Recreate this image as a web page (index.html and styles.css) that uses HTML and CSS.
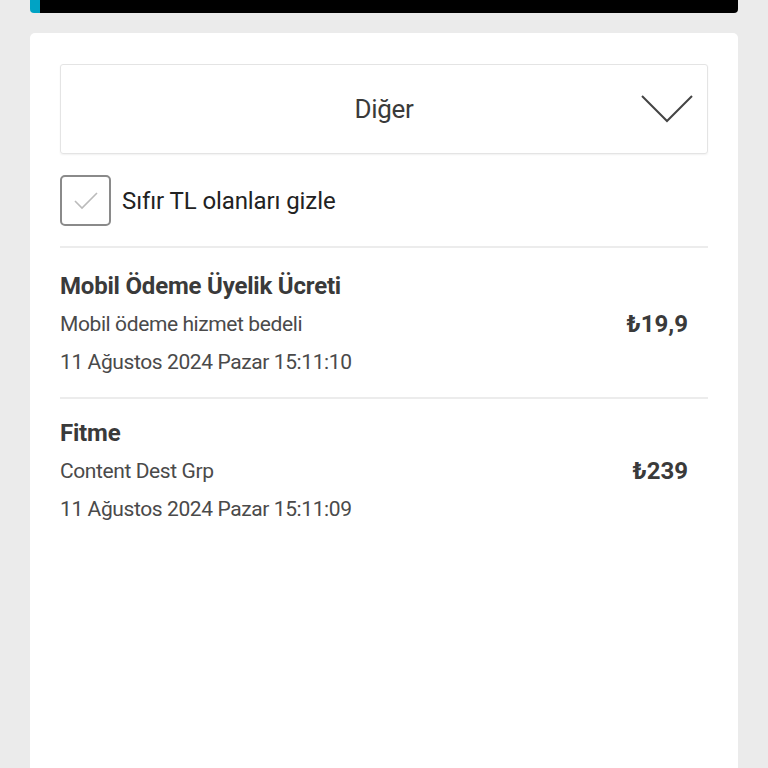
FILE: index.html
```html
<!DOCTYPE html>
<html lang="tr">
<head>
  <meta charset="UTF-8">
  <meta name="viewport" content="width=device-width, initial-scale=1.0">
  <title>Diğer harcamalar</title>
  <link rel="stylesheet" href="styles.css">
</head>
<body>
  <!-- Top bar (cut off) -->
  <div class="top-bar"></div>

  <div class="card">
    <!-- Category dropdown -->
    <div class="dropdown">
      <span class="dropdown-label">Diğer</span>
      <svg class="chevron" width="54" height="30" viewBox="0 0 54 30">
        <polyline points="2,2 27,27 52,2" fill="none" stroke="#444" stroke-width="2"/>
      </svg>
    </div>

    <label class="filter">
      <span class="checkbox">
        <svg width="26" height="20" viewBox="0 0 26 20">
          <polyline points="2,10 9,17 24,2" fill="none" stroke="#bbb" stroke-width="1.6"/>
        </svg>
      </span>
      <span class="filter-text">Sıfır TL olanları gizle</span>
    </label>

    <ul class="charges">
      <li class="charge">
        <div class="charge-info">
          <div class="charge-title">Mobil Ödeme Üyelik Ücreti</div>
          <div class="charge-desc">Mobil ödeme hizmet bedeli</div>
          <div class="charge-date">11 Ağustos 2024 Pazar 15:11:10</div>
        </div>
        <div class="charge-price">₺19,9</div>
      </li>
      <li class="charge">
        <div class="charge-info">
          <div class="charge-title">Fitme</div>
          <div class="charge-desc">Content Dest Grp</div>
          <div class="charge-date">11 Ağustos 2024 Pazar 15:11:09</div>
        </div>
        <div class="charge-price">₺239</div>
      </li>
    </ul>
  </div>
</body>
</html>
```
FILE: styles.css
```css
body {
  font-family: 'Roboto', 'Liberation Sans', sans-serif;
  background-color: #ebebeb;
  color: #333;
  margin: 0;
  padding: 0 30px;
  height: 768px;
  overflow: hidden;
}
.top-bar {
  height: 13px;
  background-color: #000;
  border-left: 10px solid #00a3c4;
  border-radius: 0 0 4px 4px;
  margin-bottom: 20px;
}
.card {
  background-color: #fff;
  border-radius: 5px 5px 0 0;
  padding: 31px 30px 0;
  height: 735px;
}
.dropdown {
  display: flex;
  align-items: center;
  justify-content: center;
  position: relative;
  height: 88px;
  border: 1px solid #e4e4e4;
  border-radius: 3px;
  box-shadow: 0 1px 2px rgba(0, 0, 0, 0.06);
}
.dropdown-label {
  font-size: 26px;
  color: #3a3a3a;
  letter-spacing: -0.3px;
}
.chevron {
  position: absolute;
  right: 13px;
  top: 29px;
}
.filter {
  display: flex;
  align-items: center;
  margin-top: 21px;
  padding-bottom: 20px;
  border-bottom: 2px solid #ececec;
}
.checkbox {
  width: 47px;
  height: 47px;
  border: 2px solid #8a8a8a;
  border-radius: 5px;
  display: flex;
  align-items: center;
  justify-content: center;
  margin-right: 11px;
}
.filter-text {
  font-size: 24px;
  color: #222;
  letter-spacing: -0.1px;
}
.charges {
  list-style: none;
  padding: 0;
  margin: 0;
}
.charge {
  display: flex;
  align-items: center;
  padding: 18px 20px 16px 0;
  border-bottom: 2px solid #ececec;
}
.charge:first-child {
  padding-top: 22px;
}
.charge:last-child {
  border-bottom: none;
}
.charge-info {
  flex: 1;
}
.charge-title {
  font-size: 24px;
  font-weight: bold;
  color: #3a3a3a;
  letter-spacing: -0.2px;
  line-height: 32px;
}
.charge-desc,
.charge-date {
  font-size: 21px;
  color: #4a4a4a;
  letter-spacing: -0.4px;
  line-height: 38px;
}
.charge-desc {
  margin-top: 3px;
}
.charge-price {
  font-size: 24px;
  font-weight: bold;
  color: #3a3a3a;
  margin-top: -4px;
}
```
